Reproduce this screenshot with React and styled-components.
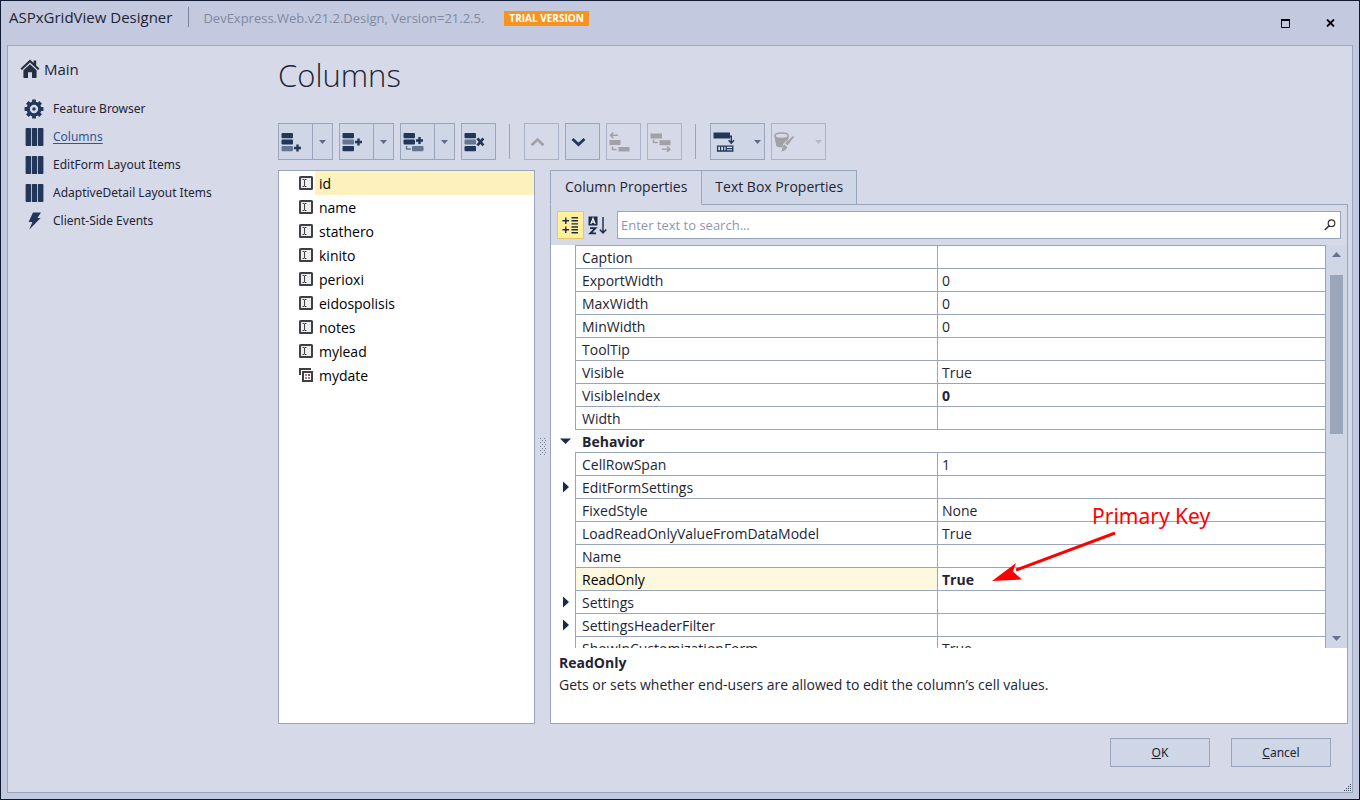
import React from 'react';
import styled, { createGlobalStyle, css } from 'styled-components';

const c = {
  ink: '#1b2a47',
  icon: '#22365a',
  text: '#1e2434',
  line: '#99a5bb',
  frame: '#c3c9df',
  panel: '#d6dae8',
  button: '#cfd6e5',
  yellow: '#fdf2bd',
};

const GlobalStyle = createGlobalStyle`
  * { box-sizing: border-box; }
  html, body, #root { height: 100%; }
  body {
    margin: 0;
    font: 14px/20px "Open Sans", "Noto Sans", sans-serif;
    color: ${c.text};
  }
  button, input { font: inherit; color: inherit; }
  svg { display: block; flex: none; }
`;

const Window = styled.div`
  height: 100%;
  min-height: 640px;
  display: flex;
  flex-direction: column;
  padding: 0 6px 6px;
  border: 1px solid #101b33;
  background: ${c.frame};
`;

const TitleBar = styled.header`
  height: 44px;
  flex: none;
  display: flex;
  align-items: flex-start;
  padding: 6px 2px 0;
`;

const AppName = styled.span`
  font-size: 15px;
  padding-right: 16px;
  white-space: nowrap;
`;

const Version = styled.span`
  height: 20px;
  font-size: 13px;
  padding: 1px 20px 0 14px;
  border-left: 1px solid #7a859f;
  color: #8189a1;
  white-space: nowrap;
`;

const Badge = styled.span`
  margin-top: 4px;
  padding: 0 5px;
  background: #f8941d;
  color: #fff;
  font-size: 10px;
  font-weight: 700;
  line-height: 15px;
  white-space: nowrap;
`;

const WindowControls = styled.div`
  margin-left: auto;
  display: flex;
  gap: 21px;
  padding: 4px 9px 0 0;
`;

const ControlButton = styled.button`
  width: 24px;
  height: 24px;
  padding: 0;
  border: 0;
  background: none;
  color: #000;
  display: grid;
  place-items: center;
`;

const Panel = styled.div`
  flex: 1;
  min-height: 0;
  display: grid;
  grid-template-columns: 270px minmax(0, 1fr);
  border: 1px solid ${c.line};
  background: ${c.panel};
`;

const Sidebar = styled.nav`
  padding: 12px 0 0 12px;
`;

const SideHeading = styled.h2`
  display: flex;
  align-items: center;
  gap: 4px;
  height: 22px;
  margin: 0 0 15px;
  font-size: 15px;
  font-weight: 400;
`;

const NavList = styled.ul`
  list-style: none;
  margin: 0;
  padding: 0 0 0 4px;
`;

const NavLink = styled.a`
  height: 28px;
  display: flex;
  align-items: center;
  gap: 9px;
  font: 12px/20px "Noto Sans", sans-serif;
  color: ${(p) => (p.$active ? '#35548f' : c.text)};
  text-decoration: ${(p) => (p.$active ? 'underline' : 'none')};
  text-underline-offset: 2px;
`;

const Main = styled.main`
  display: flex;
  flex-direction: column;
  min-width: 0;
  min-height: 0;
  padding-right: 4px;
`;

const PageTitle = styled.h1`
  flex: none;
  height: 77px;
  margin: 0;
  padding-top: 7px;
  font-size: 31px;
  line-height: 44px;
  font-weight: 300;
`;

const Toolbar = styled.div`
  flex: none;
  display: flex;
  gap: 6px;
  height: 37px;
  margin-bottom: 10px;
`;

const ToolGroup = styled.div`
  display: flex;
`;

const ToolButton = styled.button`
  width: ${(p) => (p.$wide ? 55 : 35)}px;
  height: 37px;
  padding: 0 3px 0 2px;
  display: flex;
  align-items: center;
  justify-content: space-between;
  border: 1px solid ${(p) => (p.disabled ? '#a9b2c6' : c.line)};
  background: ${(p) => (p.disabled ? 'transparent' : c.button)};
  color: ${(p) => (p.disabled ? '#a1a1a6' : c.icon)};
`;

const DropButton = styled(ToolButton)`
  width: 21px;
  padding: 0;
  margin-left: -1px;
  justify-content: center;
`;

const Separator = styled.span`
  width: 1px;
  margin: 1px 8px 1px 7px;
  background: ${c.line};
`;

const Workspace = styled.div`
  flex: 1;
  min-height: 0;
  display: grid;
  grid-template-columns: 257px 15px minmax(0, 1fr);
`;

const ColumnList = styled.ul`
  list-style: none;
  margin: 0;
  padding: 0;
  border: 1px solid ${c.line};
  background: #fff;
`;

const ColumnItem = styled.li`
  height: 24px;
  padding-left: 20px;
  display: flex;
  align-items: center;
  gap: 2px;
  color: #000;
`;

const ColumnName = styled.span`
  flex: 1;
  line-height: 24px;
  padding: 1px 0 0 4px;
  height: 24px;
  background: ${(p) => (p.$selected ? c.yellow : 'transparent')};
`;

const Splitter = styled.div`
  display: grid;
  place-items: center;
`;

const Inspector = styled.section`
  display: flex;
  flex-direction: column;
  min-width: 0;
  min-height: 0;
`;

const Tabs = styled.div`
  flex: none;
  display: flex;
  height: 35px;
  box-shadow: inset 0 -1px ${c.line};
`;

const Tab = styled.button`
  height: 35px;
  padding: 0 13px 2px;
  border: 1px solid ${c.line};
  background: ${c.button};
  white-space: nowrap;
  & + & { border-left: 0; }
  ${(p) =>
    p.$active &&
    css`
      padding: 0 14px 2px;
      background: ${c.panel};
      border-bottom-color: ${c.panel};
    `}
`;

const InspectorBody = styled.div`
  flex: 1;
  min-height: 0;
  display: flex;
  flex-direction: column;
  border: 1px solid ${c.line};
  border-top: 0;
`;

const SearchRow = styled.div`
  flex: none;
  display: flex;
  height: 40px;
  padding: 6px;
`;

const SortButton = styled.button`
  width: 27px;
  height: 28px;
  padding: 0;
  display: grid;
  place-items: center;
  color: ${c.ink};
  border: 1px solid ${(p) => (p.$active ? '#e6c766' : 'transparent')};
  background: ${(p) => (p.$active ? '#fff09c' : 'transparent')};
`;

const SearchBox = styled.label`
  flex: 1;
  height: 28px;
  margin-left: 6px;
  padding: 0 4px 0 3px;
  display: flex;
  align-items: center;
  border: 1px solid ${c.line};
  background: #fff;
`;

const SearchInput = styled.input`
  flex: 1;
  min-width: 0;
  padding: 0;
  border: 0;
  outline: 0;
  background: none;
  font-size: 13px;
  &::placeholder { color: #8e98ad; opacity: 1; }
`;

const GridArea = styled.div`
  position: relative;
  flex: 1;
  min-height: 0;
  display: flex;
  overflow: hidden;
  background: #fff;
`;

const GridClip = styled.div`
  flex: 1;
  min-width: 0;
  overflow: hidden;
`;

const PropertyTable = styled.table`
  width: 100%;
  table-layout: fixed;
  border-collapse: separate;
  border-spacing: 0;
`;

const GutterCol = styled.col` width: 24px; `;
const NameCol = styled.col` width: 363px; `;

const cell = css`
  height: 23px;
  line-height: 20px;
  padding: 2px 0 0;
  text-align: left;
  white-space: nowrap;
`;

const Gutter = styled.td`
  ${cell}
  padding: 0 0 0 9px;
  color: ${c.ink};
`;

const PropName = styled.th`
  ${cell}
  padding-left: 6px;
  font-weight: 400;
  color: ${(p) => (p.$selected ? '#000' : c.text)};
  border: solid ${c.line};
  border-width: 1px 1px 0 1px;
  background: ${(p) => (p.$selected ? '#fef8de' : '#fff')};
`;

const PropValue = styled.td`
  ${cell}
  padding-left: 4px;
  font-weight: ${(p) => (p.$bold ? 700 : 400)};
  border: solid ${c.line};
  border-width: 1px 1px 0 0;
`;

const GroupName = styled.th`
  ${cell}
  padding-left: 7px;
  font-weight: 700;
  border: solid ${c.line};
  border-width: 1px 1px 0 0;
`;

const ScrollBar = styled.div`
  flex: none;
  width: 21px;
  display: flex;
  flex-direction: column;
  align-items: center;
  padding: 7px 0;
  background: ${c.button};
  color: #657391;
`;

const Thumb = styled.div`
  width: 13px;
  height: 41%;
  margin: 18px 0 auto;
  background: #9aa7bb;
`;

const Annotation = styled.div`
  position: absolute;
  left: 441px;
  top: 255px;
  width: 220px;
  height: 84px;
  color: #f00;
`;

const AnnotationText = styled.span`
  display: block;
  padding-left: 100px;
  font: 21px/32px "Noto Sans", sans-serif;
  white-space: nowrap;
`;

const Description = styled.div`
  flex: none;
  height: 75px;
  padding: 4px 8px;
  line-height: 22px;
  background: #fff;
  p { margin: 0; }
`;

const Footer = styled.footer`
  flex: none;
  display: flex;
  justify-content: flex-end;
  align-items: flex-start;
  gap: 21px;
  height: 68px;
  padding: 14px 0 0;
`;

const DialogButton = styled.button`
  width: 100px;
  height: 29px;
  border: 1px solid ${c.line};
  background: ${c.button};
  font: 12px/20px "Noto Sans", sans-serif;
`;

const Grip = styled.div`
  align-self: flex-end;
  width: 17px;
  margin-left: -17px;
  margin-right: -4px;
`;

const HomeIcon = () => (
  <svg width="20" height="20" viewBox="0 0 20 20" fill="#252f42">
    <path d="M10 0.5 0.5 9.6 2 11 10 3.6 18 11 19.5 9.6 16.2 6.4V1.4H13.6V4z" />
    <path d="M10 5.2 3.4 11.2V18.2Q3.4 19 4.2 19H8V13.2H12V19H15.8Q16.6 19 16.6 18.2V11.2z" />
  </svg>
);

const GearIcon = () => (
  <svg width="20" height="20" viewBox="0 0 20 20" fill="none" stroke={c.icon}>
    <circle cx="10" cy="10" r="5.8" strokeWidth="3.2" />
    <circle cx="10" cy="10" r="1.7" fill={c.icon} stroke="none" />
    {[0, 45, 90, 135].map((a) => (
      <path key={a} d="M10 .6V4M10 16V19.4" strokeWidth="3.8" transform={`rotate(${a} 10 10)`} />
    ))}
  </svg>
);

const ColumnsIcon = () => (
  <svg width="20" height="20" viewBox="0 0 20 20" fill={c.icon}>
    <rect x="1.6" y="1" width="5.5" height="18" rx="0.8" />
    <rect x="7.9" y="1" width="5.200" height="18" rx="0.6" />
    <rect x="13.900" y="1" width="5.500" height="18" rx="0.8" />
  </svg>
);

const BoltIcon = () => (
  <svg width="20" height="20" viewBox="0 0 20 20" fill={c.icon}>
    <path d="M9 1.5H17L13.4 7H16.6L5.2 18.8 8.4 11H4.6z" />
  </svg>
);

const Bar = ({ x, y, light }) => (
  <rect x={x} y={y} width="11.5" height="5.2" rx="1" fill={light ? '#65748f' : c.icon} />
);

const Plus = ({ x, y }) => (
  <path d={`M${x - 3.5} ${y}h7M${x} ${y - 3.5}v7`} stroke={c.icon} strokeWidth="2.4" />
);

const AddLastIcon = () => (
  <svg width="22" height="20" viewBox="0 0 22 20">
    <Bar x="0.5" y="1" /><Bar x="0.5" y="7.4" /><Bar x="0.5" y="14" light /><Plus x={16.5} y={16} />
  </svg>
);
const InsertIcon = () => (
  <svg width="22" height="20" viewBox="0 0 22 20">
    <Bar x="0.5" y="1" /><Bar x="0.5" y="7.4" light /><Bar x="0.5" y="14" /><Plus x={16.5} y={10} />
  </svg>
);
const ChildIcon = () => (
  <svg width="22" height="20" viewBox="0 0 22 20">
    <Bar x="0.5" y="1" /><Bar x="0.5" y="7.4" /><Bar x="9" y="14" light /><Plus x={16.5} y={8.5} />
    <path d="M3.6 14v3h4.2" fill="none" stroke="#65748f" strokeWidth="1.4" />
  </svg>
);
const RemoveIcon = () => (
  <svg width="22" height="20" viewBox="0 0 22 20">
    <Bar x="0.5" y="1" /><Bar x="0.5" y="7.4" light /><Bar x="0.5" y="14" />
    <path d="m13.400 6.400 6 7m0-7-6 7" stroke={c.icon} strokeWidth="2.6" />
  </svg>
);
const ChevronIcon = ({ down }) => (
  <svg width="22" height="20" viewBox="0 0 22 20" fill="none" stroke="currentColor" strokeWidth="2.8">
    <path d={down ? 'M4.500 7l6 5.600L16.500 7' : 'M4.500 13.200l6-5.600 6 5.600'} />
  </svg>
);
const OutdentIcon = () => (
  <svg width="22" height="20" viewBox="0 0 22 20" fill="currentColor">
    <rect x="0.500" y="8" width="11" height="5" /><rect x="9.500" y="15" width="11" height="4.500" />
    <path d="M3.500 14.500v3h4.200M1 3.300h8M4.300.6 1.500 3.300 4.300 6" fill="none" stroke="currentColor" strokeWidth="1.600" />
  </svg>
);
const IndentIcon = () => (
  <svg width="22" height="20" viewBox="0 0 22 20" fill="currentColor">
    <rect x="0.5" y="1.500" width="11.500" height="5" /><rect x="9.5" y="8.200" width="11" height="5" />
    <path d="M3.5 7.5v3h4.2M12 17.200h8M17 14.500l2.8 2.7-2.8 2.7" fill="none" stroke="currentColor" strokeWidth="1.600" />
  </svg>
);
const LayoutIcon = () => (
  <svg width="22" height="20" viewBox="0 0 22 20" fill={c.icon}>
    <rect x="0.5" y="0.5" width="16.500" height="6" />
    <path d="M16.5 4.2h1.800v6.8M15.6 8.2l2.7 3 2.7-3" fill="none" stroke={c.icon} strokeWidth="1.4" />
    <path d="M4.6 14.2h15.200v4.8H4.6zM7.6 14v5M10.6 14v5M13.2 14v5M13 16.6h7" fill="#dfe4ef" stroke={c.icon} strokeWidth="1.300" />
  </svg>
);
const PaintIcon = () => (
  <svg width="22" height="20" viewBox="0 0 22 20" fill="currentColor">
    <path d="M.6 4.2C.6 5.5 2 12.8 2.4 14c.4 1 4 1.6 6 1.2L9 12l5-4.4.8-3.6z" />
    <ellipse cx="7.6" cy="3.8" rx="6.6" ry="2.7" fill={c.panel} stroke="currentColor" strokeWidth="1.5" />
    <path d="M18.4 4.2q2-1 1.8.8l-6.6 8.6-2.8-2.4z" stroke={c.panel} strokeWidth="0.5" />
    <path d="M10.2 12.6l3 2.4q-.6 4-6.4 4.4 1.600-1.4 1.400-3.2.2-2.600 2-3.600z" />
  </svg>
);
const Caret = ({ up }) => (
  <svg width="9" height="5" viewBox="0 0 9 5" fill="currentColor">
    <path d={up ? 'M0 5 4.500 0 9 5z' : 'M0 0H9L4.500 5z'} />
  </svg>
);
const SmallCaret = ({ muted }) => (
  <svg width="7" height="4" viewBox="0 0 7 4" fill={muted ? '#b4bac8' : '#5d6c8a'}>
    <path d="M0 0H7L3.500 4z" />
  </svg>
);
const TextColumnIcon = () => (
  <svg width="14" height="14" viewBox="0 0 14 14">
    <rect x="1" y="1" width="12" height="12" rx="0.5" fill="#eceef0" stroke="#3e4044" strokeWidth="2" />
    <path d="M3.500 3.500H5L5.500 4 6 3.500H7.500M3.500 10.500H5L5.500 10 6 10.500H7.500M5.500 4v6" fill="none" stroke="#3e4044" />
  </svg>
);
const DateColumnIcon = () => (
  <svg width="14" height="14" viewBox="0 0 14 14">
    <path d="M1 7V1H12" fill="none" stroke="#3e4044" strokeWidth="2" />
    <rect x="4" y="4" width="9" height="9" fill="#fff" stroke="#3e4044" strokeWidth="2" />
    <path d="M6 6h2v2H6zM6 9h2v2H6zM9 9h2v2H9z" fill="#8d8f94" />
    <path d="M9 6h2v2H9z" fill="#c03a3a" />
  </svg>
);
const CategoryIcon = () => (
  <svg width="17" height="18" viewBox="0 0 17 18" fill="none" stroke={c.ink} strokeWidth="1.400">
    <path d="M0.500 4.800h6.600M3.800 1.500v6.600M0.500 13.800h6.600M3.800 10.500v6.600M9.500 1.700h6.500M9.500 4.800h6.500M9.500 7.900h6.500M9.500 11h6.500M9.500 13.800h6.500M9.500 16.800h6.500" />
  </svg>
);
const AlphaIcon = () => (
  <svg width="19" height="19" viewBox="0 0 19 19">
    <rect x="0.500" y="0.500" width="9" height="9" fill={c.ink} />
    <path d="M2.800 8 5 2.300 7.200 8M3.600 6.200h2.800" fill="none" stroke="#fff" strokeWidth="1.200" />
    <path d="M2 12.200h5.500L2.300 17.300H8" fill="none" stroke={c.ink} strokeWidth="1.800" />
    <path d="M15 1v16M11.800 13.600 15 17l3.200-3.400" fill="none" stroke={c.ink} strokeWidth="1.400" />
  </svg>
);
const SearchIcon = () => (
  <svg width="12" height="12" viewBox="0 0 12 12" fill="none" stroke="#333">
    <circle cx="7.500" cy="4.200" r="3.300" strokeWidth="1.200" />
    <path d="M5.200 6.600.8 11" strokeWidth="1.500" />
  </svg>
);
const GroupArrow = ({ open }) => (
  <svg width="12" height="12" viewBox="0 0 12 12" fill="currentColor">
    <path d={open ? 'M0 3.500H11L5.500 9z' : 'M3 0.500 9 6 3 11.500z'} />
  </svg>
);
const Dots = () => (
  <svg width="6" height="18" viewBox="0 0 6 18" fill="#7d879c">
    {[0, 1, 2, 3, 4, 5, 6, 7, 8].map((i) => (
      <React.Fragment key={i}>
        <rect x={i % 2 ? 2 : 0} y={i * 2} width="1" height="1" />
        <rect x={i % 2 ? 5 : 4} y={i * 2} width="1" height="1" />
      </React.Fragment>
    ))}
  </svg>
);
const GripIcon = () => (
  <svg width="17" height="9" viewBox="0 0 17 9" fill="#39445c">
    {[[15, 1], [13, 3], [15, 3], [11, 5], [13, 5], [15, 5], [9, 7], [11, 7], [13, 7], [15, 7]].map(([x, y]) => (
      <rect key={`${x}-${y}`} x={x} y={y} width="1" height="1" />
    ))}
  </svg>
);

const navItems = [
  ['Feature Browser', GearIcon],
  ['Columns', ColumnsIcon],
  ['EditForm Layout Items', ColumnsIcon],
  ['AdaptiveDetail Layout Items', ColumnsIcon],
  ['Client-Side Events', BoltIcon],
];

const columns = ['id', 'name', 'stathero', 'kinito', 'perioxi', 'eidospolisis', 'notes', 'mylead', 'mydate'];

const properties = [
  { name: 'Caption' },
  { name: 'ExportWidth', value: '0' },
  { name: 'MaxWidth', value: '0' },
  { name: 'MinWidth', value: '0' },
  { name: 'ToolTip' },
  { name: 'Visible', value: 'True' },
  { name: 'VisibleIndex', value: '0', bold: true },
  { name: 'Width' },
  { name: 'Behavior', group: true },
  { name: 'CellRowSpan', value: '1' },
  { name: 'EditFormSettings', expandable: true },
  { name: 'FixedStyle', value: 'None' },
  { name: 'LoadReadOnlyValueFromDataModel', value: 'True' },
  { name: 'Name' },
  { name: 'ReadOnly', value: 'True', bold: true, selected: true },
  { name: 'Settings', expandable: true },
  { name: 'SettingsHeaderFilter', expandable: true },
  { name: 'ShowInCustomizationForm', value: 'True' },
];

const SplitTool = ({ label, children }) => (
  <ToolGroup>
    <ToolButton aria-label={label}>{children}</ToolButton>
    <DropButton aria-label={`${label} options`}><SmallCaret /></DropButton>
  </ToolGroup>
);

const PropertyRow = ({ item }) =>
  item.group ? (
    <tr>
      <Gutter><GroupArrow open /></Gutter>
      <GroupName colSpan={2} scope="rowgroup">{item.name}</GroupName>
    </tr>
  ) : (
    <tr>
      <Gutter>{item.expandable && <GroupArrow />}</Gutter>
      <PropName scope="row" $selected={item.selected}>{item.name}</PropName>
      <PropValue $bold={item.bold}>{item.value}</PropValue>
    </tr>
  );

export default function App() {
  return (
    <>
      <GlobalStyle />
      <Window>
        <TitleBar>
          <AppName>ASPxGridView Designer</AppName>
          <Version>DevExpress.Web.v21.2.Design, Version=21.2.5.</Version>
          <Badge>TRIAL VERSION</Badge>
          <WindowControls>
            <ControlButton aria-label="Maximize">
              <svg width="9" height="9" viewBox="0 0 9 9"><path d="M.5 1v7.500h8V1M0 1h9" fill="none" stroke="#000" /><path d="M0 0h9v2H0z" /></svg>
            </ControlButton>
            <ControlButton aria-label="Close">
              <svg width="9" height="8" viewBox="0 0 9 8"><path d="m1 .5 7 7m0-7-7 7" stroke="#000" strokeWidth="1.800" /></svg>
            </ControlButton>
          </WindowControls>
        </TitleBar>
        <Panel>
          <Sidebar>
            <SideHeading><HomeIcon />Main</SideHeading>
            <NavList>
              {navItems.map(([label, Icon]) => (
                <li key={label}>
                  <NavLink href="#" $active={label === 'Columns'}><Icon />{label}</NavLink>
                </li>
              ))}
            </NavList>
          </Sidebar>
          <Main>
            <PageTitle>Columns</PageTitle>
            <Toolbar>
              <SplitTool label="Add column"><AddLastIcon /></SplitTool>
              <SplitTool label="Insert column"><InsertIcon /></SplitTool>
              <SplitTool label="Add child column"><ChildIcon /></SplitTool>
              <ToolButton aria-label="Remove"><RemoveIcon /></ToolButton>
              <Separator />
              <ToolButton aria-label="Move up" disabled><ChevronIcon /></ToolButton>
              <ToolButton aria-label="Move down"><ChevronIcon down /></ToolButton>
              <ToolButton aria-label="Move left" disabled><OutdentIcon /></ToolButton>
              <ToolButton aria-label="Move right" disabled><IndentIcon /></ToolButton>
              <Separator />
              <ToolButton aria-label="Change column type" $wide><LayoutIcon /><SmallCaret /></ToolButton>
              <ToolButton aria-label="Clear data" $wide disabled><PaintIcon /><SmallCaret muted /></ToolButton>
            </Toolbar>
            <Workspace>
              <ColumnList>
                {columns.map((name, i) => (
                  <ColumnItem key={name}>
                    {name === 'mydate' ? <DateColumnIcon /> : <TextColumnIcon />}
                    <ColumnName $selected={i === 0}>{name}</ColumnName>
                  </ColumnItem>
                ))}
              </ColumnList>
              <Splitter><Dots /></Splitter>
              <Inspector>
                <Tabs>
                  <Tab $active>Column Properties</Tab>
                  <Tab>Text Box Properties</Tab>
                </Tabs>
                <InspectorBody>
                  <SearchRow>
                    <SortButton aria-label="Categorized" $active><CategoryIcon /></SortButton>
                    <SortButton aria-label="Alphabetical"><AlphaIcon /></SortButton>
                    <SearchBox>
                      <SearchInput aria-label="Search properties" placeholder="Enter text to search..." />
                      <SearchIcon />
                    </SearchBox>
                  </SearchRow>
                  <GridArea>
                    <GridClip>
                      <PropertyTable>
                        <colgroup><GutterCol /><NameCol /><col /></colgroup>
                        <tbody>
                          {properties.map((item) => <PropertyRow key={item.name} item={item} />)}
                        </tbody>
                      </PropertyTable>
                    </GridClip>
                    <ScrollBar>
                      <Caret up />
                      <Thumb />
                      <Caret />
                    </ScrollBar>
                    <Annotation>
                      <AnnotationText>Primary Key</AnnotationText>
                      <svg width="126" height="52" viewBox="0 0 126 52" fill="#f00">
                        <path d="M123 1 24 38" stroke="#f00" strokeWidth="3" />
                        <path d="M0 49 24 31 21 39.500 30 47.500z" />
                      </svg>
                    </Annotation>
                  </GridArea>
                  <Description>
                    <p><strong>ReadOnly</strong></p>
                    <p>Gets or sets whether end-users are allowed to edit the column’s cell values.</p>
                  </Description>
                </InspectorBody>
              </Inspector>
            </Workspace>
            <Footer>
              <DialogButton><u>O</u>K</DialogButton>
              <DialogButton><u>C</u>ancel</DialogButton>
              <Grip><GripIcon /></Grip>
            </Footer>
          </Main>
        </Panel>
      </Window>
    </>
  );
}
